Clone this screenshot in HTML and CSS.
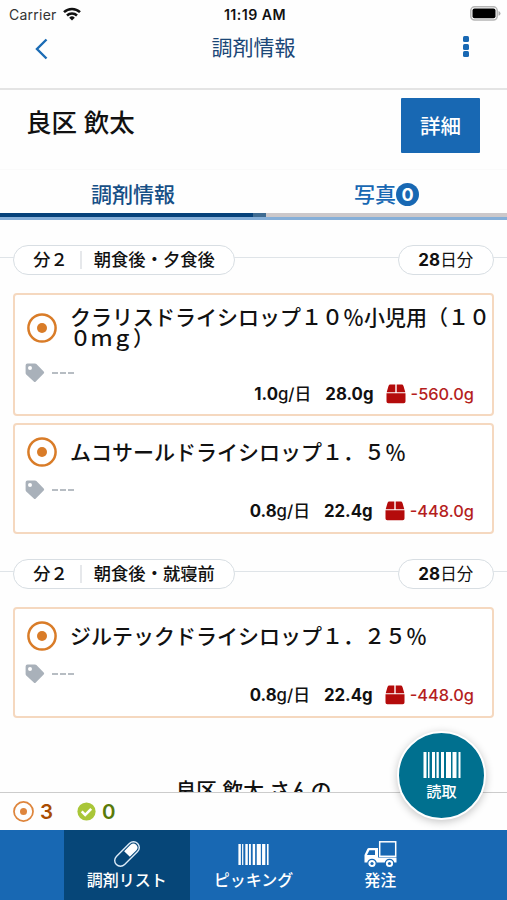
FILE: index.html
```html
<!DOCTYPE html>
<html lang="ja">
<head>
<meta charset="utf-8">
<title>調剤情報</title>
<link rel="stylesheet" href="styles.css">
</head>
<body>
<svg class="defs" width="0" height="0">
  <symbol id="target" viewBox="0 0 30 30"><circle cx="15" cy="15" r="13.6" fill="none" stroke="currentColor" stroke-width="2.5"/><circle cx="15" cy="15" r="5" fill="currentColor"/></symbol>
  <symbol id="tag" viewBox="0 0 20 20"><path fill="currentColor" fill-rule="evenodd" d="M2.5.5H10q.8 0 1.4.6l7.300 7.300q1 1 0 2l-7.900 8.200q-1 1-2 0L1.200 11.400Q.6 10.800.6 10V2.400Q.6.500 2.500.500zM5 3a2 2 0 1 0 0 4 2 2 0 0 0 0-4z"/></symbol>
  <symbol id="box" viewBox="0 0 20 20"><path fill="currentColor" d="M4.200.500h5.100v7.700H.700l1.800-6.300Q3 .500 4.200.500zM10.700.500h5.100q1.200 0 1.700 1.400l1.800 6.300h-8.600zM.5 9.200h19v8.300q0 1.800-1.800 1.800H2.300Q.5 19.300.5 17.500z"/></symbol>
  <symbol id="barcode" viewBox="0 0 38 26" preserveAspectRatio="none"><path fill="currentColor" d="M.500 0h3v26h-3zM5 0h1.500v26H5zM9 0h3v26H9zM13.500 0h2.300v26h-2.300zM18 0h3v26h-3zM23 0h5v26h-5zM29.500 0h4v26h-4zM35.500 0h2v26h-2z"/></symbol>
</svg>
<div class="app">
  <div class="statusbar">
    <div class="carrier">Carrier
      <svg width="18" height="14" viewBox="0 0 18 14"><g fill="none" stroke="#111" stroke-width="2.500"><path d="M1 5.200a11.400 11.400 0 0 1 16 0"/><path d="M4 8.500a7.200 7.200 0 0 1 10 0"/></g><path fill="#111" d="M9 13.500 6.200 10.700a4 4 0 0 1 5.600 0z"/></svg>
    </div>
    <div class="clock">11:19 AM</div>
    <div class="power"><svg width="31" height="15" viewBox="0 0 31 15"><rect x=".8" y=".8" width="26.400" height="13.200" rx="3.800" fill="#fff" stroke="#b5b5b5" stroke-width="1.500"/><rect x="2.500" y="2.600" width="23" height="9.600" rx="2" fill="#000"/><path d="M28.500 5q2 .6 2 2.400t-2 2.400z" fill="#aaa"/></svg></div>
  </div>
  <header class="header">
    <svg class="back" width="14" height="22" viewBox="0 0 14 22"><path d="M12.500 1.500 3 11l9.500 9.500" fill="none" stroke="#1b6cb5" stroke-width="2.400"/></svg>
    <h1>調剤情報</h1>
    <div class="more"><i></i><i></i><i></i></div>
  </header>
  <section class="patient">
    <h2>良区 飲太</h2>
    <button class="detail">詳細</button>
  </section>
  <nav class="tabs">
    <div class="tab active">調剤情報</div>
    <div class="tab">写真<span class="count">0</span></div>
  </nav>
  <div class="tabline"><div class="indicator"></div></div>
  <main class="content">
    <div class="group">
      <div class="pill timing"><span>分２</span><i></i><span>朝食後・夕食後</span></div>
      <div class="pill days"><b>28</b>日分</div>
    </div>
    <article class="card tall">
      <div class="drug"><svg class="target"><use href="#target"/></svg><h3>クラリスドライシロップ１０％小児用（１００ｍｇ）</h3></div>
      <div class="lot"><svg class="tag"><use href="#tag"/></svg><i></i><i></i><i></i></div>
      <div class="dose"><span><b>1.0</b>g/日</span><b class="total">28.0g</b><svg class="box"><use href="#box"/></svg><span class="stock">-560.0g</span></div>
    </article>
    <article class="card">
      <div class="drug"><svg class="target"><use href="#target"/></svg><h3>ムコサールドライシロップ１．５％</h3></div>
      <div class="lot"><svg class="tag"><use href="#tag"/></svg><i></i><i></i><i></i></div>
      <div class="dose"><span><b>0.8</b>g/日</span><b class="total">22.4g</b><svg class="box"><use href="#box"/></svg><span class="stock">-448.0g</span></div>
    </article>
    <div class="group next">
      <div class="pill timing"><span>分２</span><i></i><span>朝食後・就寝前</span></div>
      <div class="pill days"><b>28</b>日分</div>
    </div>
    <article class="card">
      <div class="drug"><svg class="target"><use href="#target"/></svg><h3>ジルテックドライシロップ１．２５％</h3></div>
      <div class="lot"><svg class="tag"><use href="#tag"/></svg><i></i><i></i><i></i></div>
      <div class="dose"><span><b>0.8</b>g/日</span><b class="total">22.4g</b><svg class="box"><use href="#box"/></svg><span class="stock">-448.0g</span></div>
    </article>
    <p class="closing"><b>良区 飲太</b> さんの</p>
  </main>
  <div class="summary">
    <svg class="mini"><use href="#target"/></svg><b class="pending">3</b>
    <svg width="19" height="19" viewBox="0 0 19 19"><circle cx="9.500" cy="9.500" r="9.100" fill="#a9c638"/><path d="m4.700 9.400 3.500 3.500 6-6.100" fill="none" stroke="#fff" stroke-width="2.600"/></svg><b class="done">0</b>
  </div>
  <nav class="bottom">
    <div class="item current">
      <svg width="28" height="28" viewBox="0 0 28 28"><g transform="rotate(45 14 14)"><rect x="8.200" y="-1" width="11.600" height="30" rx="5.800" fill="none" stroke="#dcebf8" stroke-width="1.400"/><path d="M10 14V5a4 4 0 0 1 8 0v9z" fill="#fff"/></g></svg>
      <span>調剤リスト</span>
    </div>
    <div class="item">
      <svg class="bars" width="31" height="21"><use href="#barcode"/></svg>
      <span>ピッキング</span>
    </div>
    <div class="item">
      <svg width="33" height="27" viewBox="0 0 33 27"><path fill="#fff" fill-rule="evenodd" d="M5 7h9v14.500H.500V14L3.300 8q.5-1 1.700-1zm.4 2.200L3 14h8V9.200z"/><rect x="15.700" y=".8" width="16" height="14.500" fill="none" stroke="#fff" stroke-width="1.500"/><path fill="#fff" d="M14 16.500h18.500v5H14z"/><g fill="#fff" stroke="#1868b3" stroke-width="1.200"><circle cx="8" cy="22.500" r="4.200"/><circle cx="25.500" cy="22.500" r="4.200"/></g><circle cx="8" cy="22.500" r="1.600" fill="#1868b3"/><circle cx="25.500" cy="22.500" r="1.600" fill="#1868b3"/></svg>
      <span>発注</span>
    </div>
  </nav>
  <button class="scan"><svg width="38" height="26"><use href="#barcode"/></svg><span>読取</span></button>
</div>
</body>
</html>
```

FILE: styles.css
```css
* { box-sizing: border-box; }
body, h1, h2, h3, p { margin: 0; font-weight: 500; }
body { background: #fefefe; color: #111; font-family: Inter, "Noto Sans CJK JP", sans-serif; }
button { border: 0; padding: 0; font-family: inherit; color: #fff; }
svg { display: block; flex: none; overflow: visible; }
.defs { position: absolute; }
b { font-weight: 700; }
.app { position: relative; width: 507px; height: 900px; overflow: hidden; display: flex; flex-direction: column; }

.statusbar { height: 28px; flex: none; display: grid; grid-template-columns: 1fr auto 1fr; align-items: center; padding: 0 6px 0 9px; font-size: 14px; }
.carrier { display: flex; align-items: center; gap: 6px; color: #333; font-weight: 400; letter-spacing: .25px; }
.clock { font-weight: 600; font-size: 14.200px; letter-spacing: .45px; }
.power { display: flex; justify-content: flex-end; padding-bottom: 2px; }

.header { height: 61.500px; flex: none; display: grid; grid-template-columns: 40px 1fr 40px; justify-items: center; padding: 0 21px; border-bottom: 2px solid #e4e4e4; }
.back { margin-top: 10px; }
.header h1 { color: #1b4777; font-size: 21px; line-height: 30px; font-weight: 400; margin-top: 5px; }
.more { display: flex; flex-direction: column; gap: 1.500px; margin-top: 8px; }
.more i { width: 6px; height: 6px; border-radius: 1.500px; background: #1868b3; }

.patient { height: 80.500px; flex: none; display: flex; justify-content: space-between; padding: 8.500px 27px 0 26px; border-bottom: 1px solid #fafafa; }
.patient h2 { font-size: 25.500px; line-height: 36px; margin-top: 7px; color: #111; }
.detail { width: 79px; height: 55px; border-radius: 1px; background: #1868b3; font-size: 20.500px; font-weight: 500; padding-bottom: 2px; }

.tabs { height: 43px; flex: none; display: flex; }
.tab { width: 266px; display: flex; align-items: center; justify-content: center; padding-top: 2px; font-size: 21px; font-weight: 500; color: #1868b3; }
.tab + .tab { width: 241px; }
.tab.active { color: #164f86; }
.count { width: 23px; height: 23px; margin-top: 3px; border-radius: 50%; background: #1868b3; color: #fff; font-size: 18px; font-weight: 700; line-height: 23px; text-align: center; }
.tabline { height: 7px; flex: none; background: #ccc8ca; border-bottom: 3px solid #86afd8; }
.indicator { width: 266px; height: 4px; background: linear-gradient(90deg, #06427a 0 253px, #3f6b91 253px); }

.content { flex: 1; min-height: 0; overflow: hidden; padding: 25px 13px 0; }
.group { height: 30px; display: flex; justify-content: space-between; margin: 0 -13px 18px; padding: 0 13px; background: linear-gradient(#dfe4e8, #dfe4e8) 0 12px / 100% 1px no-repeat; }
.group.next { margin-top: 25px; }
.pill { height: 30px; border: 1.500px solid #d8dee3; border-radius: 15px; background: #fff; display: flex; align-items: center; justify-content: center; font-size: 17.300px; font-weight: 500; line-height: 28px; }
.timing { width: 222px; gap: 12px; }
.timing i { width: 2px; height: 18px; background: #e6e8eb; }
.days { width: 96.500px; font-weight: 400; font-size: 16.500px; }
.days b { font-size: 17px; }

.card { height: 111px; border: 2px solid #f5d8bf; border-radius: 4px; background: #fff; padding: 12px 5px 0 12px; margin-bottom: 7px; display: flex; flex-direction: column; }
.card.tall { height: 123px; }
.drug { display: flex; align-items: center; gap: 13px; min-height: 30px; color: #d97c28; }
.target { width: 30px; height: 30px; }
.drug h3 { flex: 1; color: #111; font-size: 21px; line-height: 21px; white-space: nowrap; margin-right: -5px; }
.tall .drug { min-height: 42px; }
.tall .drug h3 { white-space: normal; width: 421px; flex: none; word-break: break-all; line-break: anywhere; }
.lot { display: flex; align-items: center; gap: 2px; height: 20px; margin-top: 13px; color: #a9b1ba; }
.lot i { width: 6px; height: 2px; background: #b7bdc3; }
.tag { width: 20px; height: 20px; margin-left: -2px; margin-right: 5px; }
.dose { display: flex; align-items: center; justify-content: flex-end; height: 22px; padding-right: 13px; font-size: 16.800px; line-height: 22px; }
.tall .lot { margin-top: 14px; }
.total { margin-left: 14px; }
.box { width: 20px; height: 20px; margin: 0 5px 0 12px; color: #b40b0b; }
.stock { color: #b51e1e; font-size: 16.400px; }
.closing { text-align: center; font-size: 20.700px; line-height: 30px; margin-top: 58px; }
.closing b { font-weight: 500; }

.summary { height: 38px; flex: none; display: flex; align-items: center; border-top: 1px solid #ccc; padding: 0 13px; font-size: 20.500px; }
.summary b { font-weight: 600; }
.mini { width: 21px; height: 21px; color: #de853c; margin-right: 6px; }
.pending { color: #a94b00; margin-right: 24px; }
.done { color: #597a09; margin-left: 6px; }

.bottom { height: 70px; flex: none; display: flex; padding: 0 63.500px; background: #1868b3; color: #fff; }
.item { width: 126.670px; display: flex; flex-direction: column; align-items: center; justify-content: flex-end; gap: 1px; padding-bottom: 8px; font-size: 16px; line-height: 23px; font-weight: 500; }
.item.current { background: #064678; }
.bars { margin-bottom: 3px; }

.scan { position: absolute; left: 397px; top: 731px; width: 89px; height: 89px; border: 2.500px solid #fff; border-radius: 50%; background: #00708f; box-shadow: 0 2px 8px rgba(0, 0, 0, .23); display: flex; flex-direction: column; align-items: center; padding-top: 19px; font-size: 15.200px; line-height: 22px; font-weight: 500; gap: 3px; }
```
